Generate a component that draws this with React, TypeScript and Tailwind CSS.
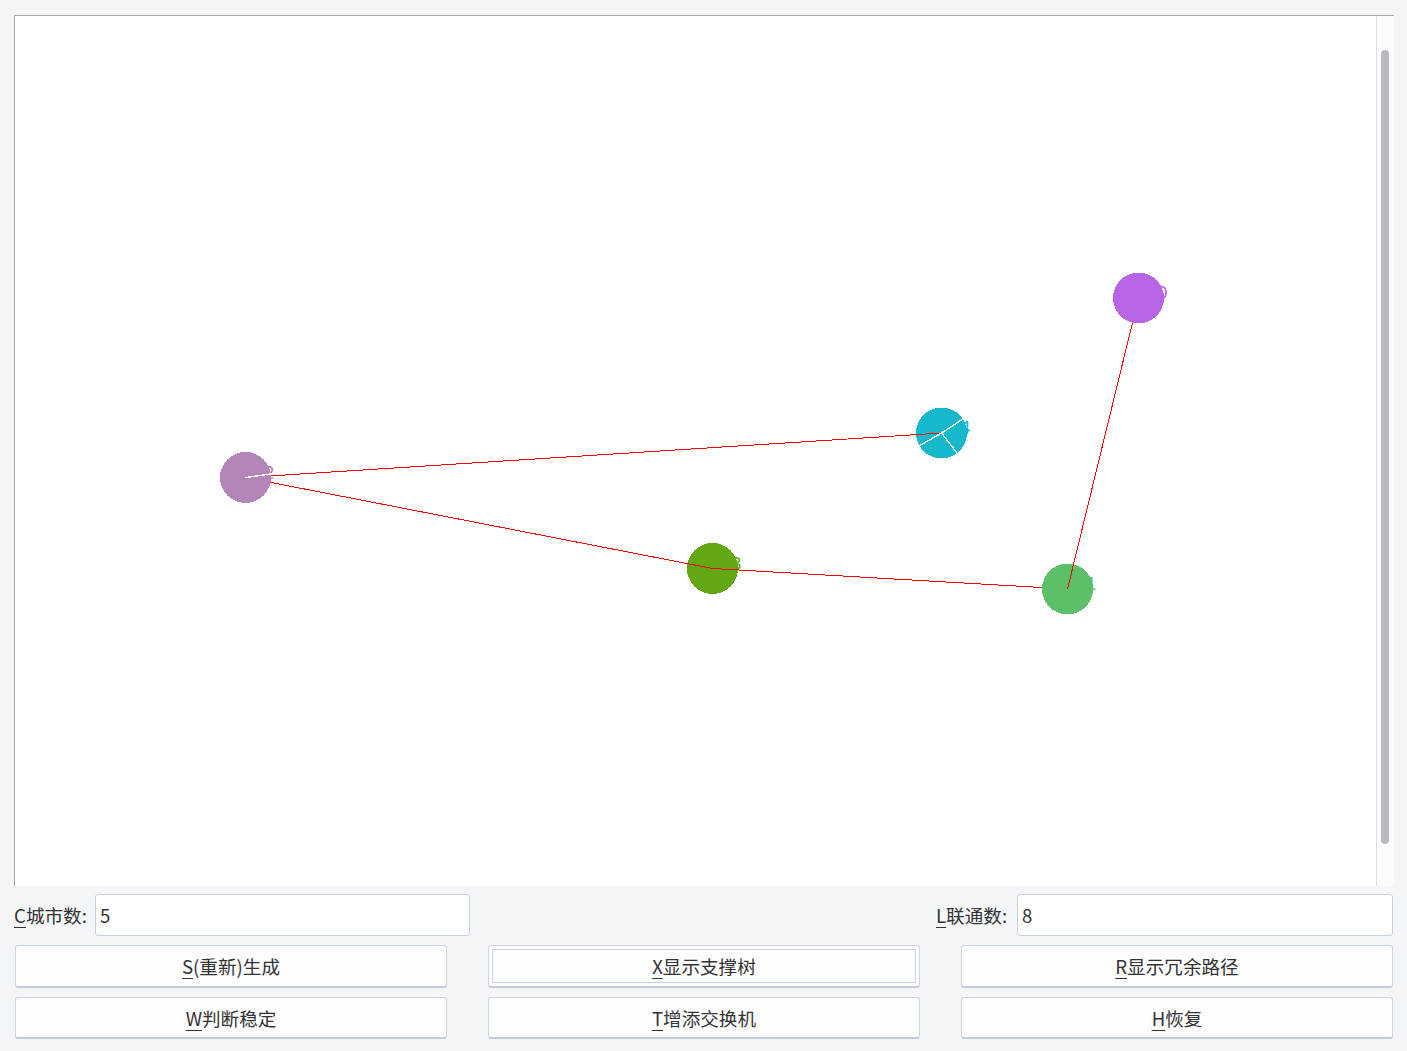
import React from "react";

const font = { fontFamily: '"Noto Sans CJK SC", "Noto Sans", sans-serif' };

type N = { x: number; y: number; c: string; l: string };
const nodes: Record<string, N> = {
  n0: { x: 1138.5, y: 298, c: "#b866e6", l: "0" },
  n1: { x: 1067.5, y: 589, c: "#5cc069", l: "1" },
  n2: { x: 245.5, y: 477.5, c: "#b485b8", l: "2" },
  n3: { x: 712.5, y: 568.5, c: "#62a812", l: "3" },
  n4: { x: 941.5, y: 433, c: "#17b8cc", l: "4" },
};

function Circle({ n }: { n: N }) {
  return <circle cx={n.x} cy={n.y} r={25.5} fill={n.c} />;
}

function Graph() {
  const { n0, n1, n2, n3, n4 } = nodes;
  return (
    <svg
      className="block"
      width={1361}
      height={870}
      viewBox="15 16 1361 870"
      shapeRendering="crispEdges"
    >
      {Object.values(nodes).map((n) => (
        <text
          key={n.l}
          x={n.x + 18}
          y={n.y + 1}
          fill={n.c}
          fontSize={18}
          fontFamily="DejaVu Sans, sans-serif"
        >
          {n.l}
        </text>
      ))}
      <Circle n={n3} />
      <Circle n={n4} />
      <g stroke="#ff0000" strokeWidth={1}>
        <line x1={n2.x} y1={n2.y} x2={n4.x} y2={n4.y} />
        <line x1={n2.x} y1={n2.y} x2={n3.x} y2={n3.y} />
        <line x1={n3.x} y1={n3.y} x2={n1.x} y2={n1.y} />
      </g>
      <Circle n={n2} />
      <Circle n={n1} />
      <line x1={n1.x} y1={n1.y} x2={n0.x} y2={n0.y} stroke="#ff0000" strokeWidth={1} />
      <Circle n={n0} />
      <g stroke="#ffffff" strokeWidth={1.4}>
        <line x1={n2.x} y1={n2.y} x2={271} y2={474} />
        <line x1={n4.x} y1={n4.y} x2={963} y2={419} />
        <line x1={n4.x} y1={n4.y} x2={919} y2={446} />
        <line x1={n4.x} y1={n4.y} x2={957} y2={453} />
      </g>
    </svg>
  );
}

function Mn({ k, rest }: { k: string; rest: string }) {
  return (
    <span>
      <span className="underline underline-offset-[4px] decoration-1">{k}</span>
      {rest}
    </span>
  );
}

function Btn({ k, rest, focus }: { k: string; rest: string; focus?: boolean }) {
  return (
    <div className="h-full rounded-[3px] border border-[#cdd4e4] border-b-[#c3cadb] border-b-2 bg-[#fdfdfe] p-[3px]">
      <div
        className={
          "flex h-full items-center justify-center text-[18.6px] text-[#333] " +
          (focus ? "border border-[#c6d0e8]" : "border border-transparent")
        }
      >
        <Mn k={k} rest={rest} />
      </div>
    </div>
  );
}

export default function App() {
  return (
    <div className="w-[1407px] h-[1051px] bg-[#f4f5f7] overflow-hidden" style={font}>
      <div className="pt-[15px] pl-[14px]">
        <div className="flex w-[1380px] h-[871px] border-l border-t border-[#a3a7ae]">
          <div className="bg-white">
            <Graph />
          </div>
          <div className="w-[1px] bg-[#dde1e7]" />
          <div className="flex-1 bg-[#fbfbfc] pt-[34px] pl-[4px]">
            <div className="w-[8px] h-[794px] rounded-[4px] bg-[#b9bac1]" />
          </div>
        </div>
      </div>

      <div className="flex items-center mt-[8px] h-[42px] text-[18.6px] text-[#333]">
        <div className="w-[95px] pl-[14px]">
          <Mn k="C" rest="城市数:" />
        </div>
        <div className="w-[375px] h-[42px] rounded-[3px] border border-[#c9d0e1] bg-white flex items-center pl-[4px]">
          5
        </div>
        <div className="w-[466px]" />
        <div className="w-[81px]">
          <Mn k="L" rest="联通数:" />
        </div>
        <div className="w-[376px] h-[42px] rounded-[3px] border border-[#c9d0e1] bg-white flex items-center pl-[4px]">
          8
        </div>
      </div>

      <div className="ml-[15px] mt-[9px] w-[1378px] grid grid-cols-3 gap-x-[41px] gap-y-[9px] grid-rows-[43px_42px]">
        <Btn k="S" rest="(重新)生成" />
        <Btn k="X" rest="显示支撑树" focus />
        <Btn k="R" rest="显示冗余路径" />
        <Btn k="W" rest="判断稳定" />
        <Btn k="T" rest="增添交换机" />
        <Btn k="H" rest="恢复" />
      </div>
    </div>
  );
}
